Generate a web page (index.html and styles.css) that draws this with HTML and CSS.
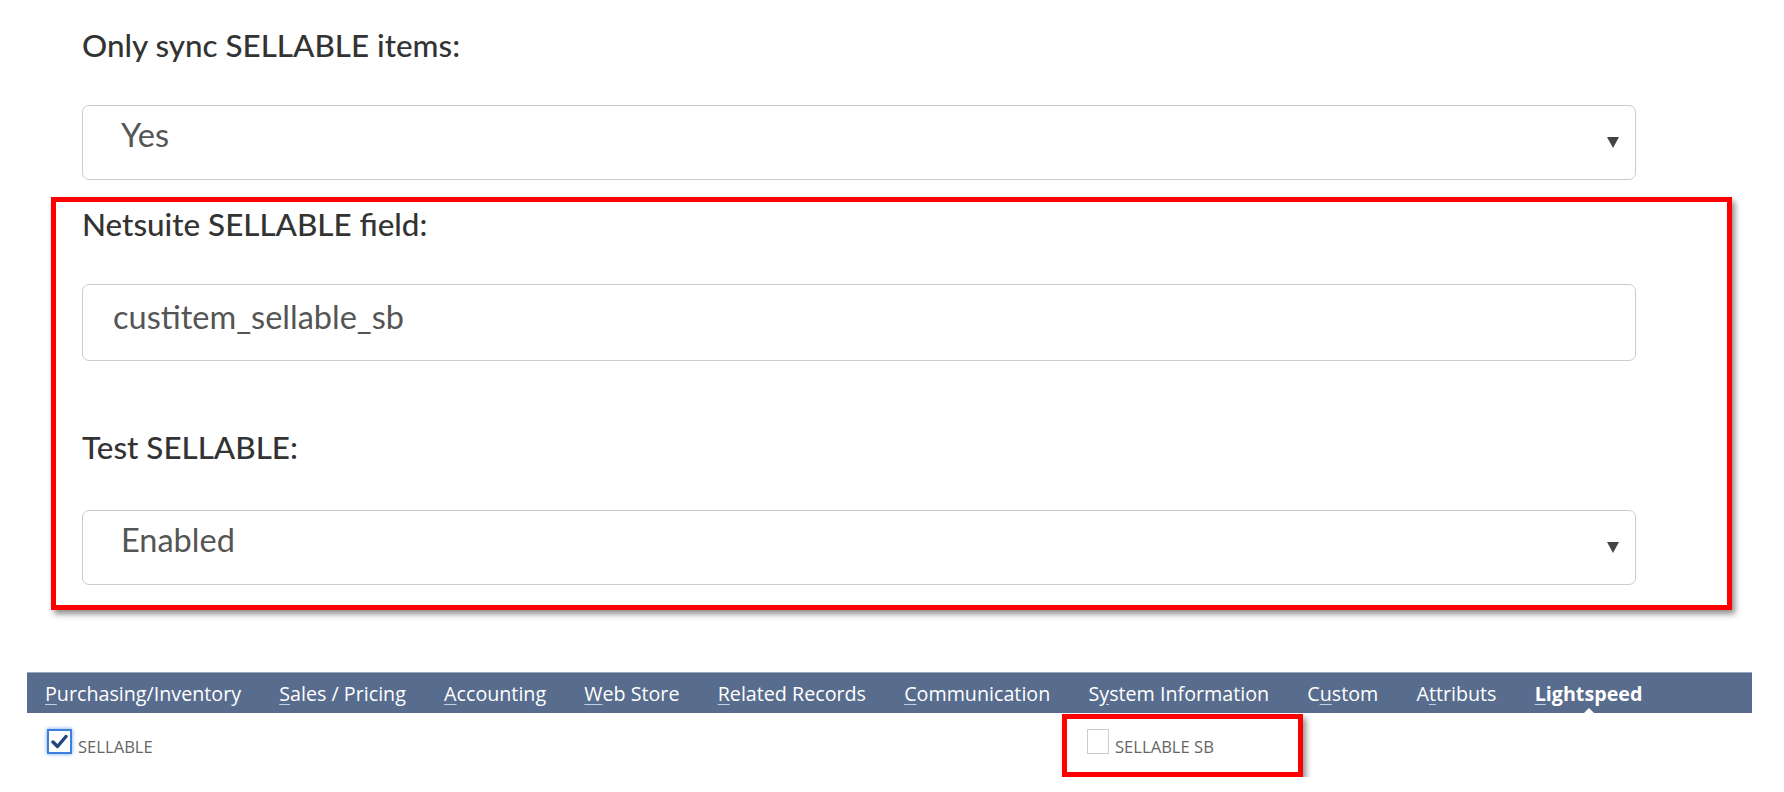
FILE: index.html
```html
<!DOCTYPE html>
<html lang="en">
<head>
  <meta charset="UTF-8" />
  <title>Lightspeed Settings</title>
  <link rel="stylesheet" href="styles.css">
</head>
<body>
  <div class="settings">
    <div class="field">
      <label class="field-label">Only sync SELLABLE items:</label>
      <div class="select-wrap">
        <select class="control">
          <option>Yes</option>
        </select>
      </div>
    </div>

    <div class="highlight">
      <div class="field">
        <label class="field-label">Netsuite SELLABLE field:</label>
        <input class="control text-control" type="text" value="custitem_sellable_sb" />
      </div>
      <div class="field field-spaced">
        <label class="field-label">Test SELLABLE:</label>
        <div class="select-wrap">
          <select class="control">
            <option>Enabled</option>
          </select>
        </div>
      </div>
    </div>
  </div>

  <div class="record">
    <div class="tabs">
      <span class="tab"><u>P</u>urchasing/Inventory</span>
      <span class="tab"><u>S</u>ales / Pricing</span>
      <span class="tab"><u>A</u>ccounting</span>
      <span class="tab"><u>W</u>eb Store</span>
      <span class="tab"><u>R</u>elated Records</span>
      <span class="tab"><u>C</u>ommunication</span>
      <span class="tab">S<u>y</u>stem Information</span>
      <span class="tab">C<u>u</u>stom</span>
      <span class="tab">A<u>t</u>tributs</span>
      <span class="tab tab-active"><u>L</u>ightspeed</span>
    </div>

    <div class="checkbox-row">
      <div class="check-field">
        <span class="checkbox checked">
          <svg width="17" height="15" viewBox="0 0 17 15"><path d="M2 8 L6.5 12.5 L15 2.5" fill="none" stroke="#24467e" stroke-width="3.4" stroke-linecap="round" stroke-linejoin="round"/></svg>
        </span>
        <span class="check-label">SELLABLE</span>
      </div>
      <div class="check-field highlight-small">
        <span class="checkbox"></span>
        <span class="check-label">SELLABLE SB</span>
      </div>
    </div>
  </div>
</body>
</html>
```

FILE: styles.css
```css
body {
  margin: 0;
  background: #fff;
  font-family: Lato, "Liberation Sans", sans-serif;
  color: #333;
}

.settings {
  padding-top: 25px;
  width: 1681px;
}

.field {
  padding-left: 82px;
  width: 1554px;
}

.highlight .field {
  padding-left: 26px;
}

.field-label {
  display: block;
  font-size: 31.4px;
  line-height: 40px;
  font-weight: 500;
  color: #333;
  margin-bottom: 40px;
}

.field-spaced {
  margin-top: 66px;
}

.select-wrap {
  position: relative;
}

.select-wrap::after {
  content: "";
  position: absolute;
  right: 17px;
  top: 32px;
  border-left: 6px solid transparent;
  border-right: 6px solid transparent;
  border-top: 11px solid #444;
  pointer-events: none;
}

.control {
  display: block;
  box-sizing: border-box;
  width: 100%;
  height: 75px;
  padding: 0 40px 16px 38px;
  border: 1px solid #ccc;
  border-radius: 7px;
  background: #fff;
  font-family: Lato, "Liberation Sans", sans-serif;
  font-size: 32.5px;
  color: #555;
  appearance: none;
  -webkit-appearance: none;
  outline: none;
}

.text-control {
  height: 77px;
  padding-left: 30px;
  padding-bottom: 12px;
}

.highlight {
  margin: 17px 0 0 51px;
  border: 5px solid #ff0000;
  padding: 2px 91px 20px 0;
  width: 1580px;
  box-shadow: 3px 4px 6px rgba(0, 0, 0, 0.45);
}

.highlight .field-spaced .field-label {
  margin-bottom: 43px;
}

.record {
  margin: 62px 0 0 27px;
  width: 1725px;
  font-family: "Open Sans", sans-serif;
}

.tabs {
  display: flex;
  gap: 38.2px;
  height: 40px;
  align-items: center;
  padding-left: 18px;
  background: #586c8e;
  border-top: 1px solid #9aa9c0;
}

.tab {
  position: relative;
  color: #fff;
  font-size: 19.7px;
  white-space: nowrap;
}

.tab u {
  text-decoration-color: #c5cede;
  text-underline-offset: 3px;
}

.tab-active {
  font-weight: 700;
}

.tab-active::after {
  content: "";
  position: absolute;
  left: 50%;
  bottom: -9px;
  margin-left: -8px;
  border-left: 8px solid transparent;
  border-right: 8px solid transparent;
  border-bottom: 8px solid #fff;
}

.checkbox-row {
  display: grid;
  grid-template-columns: 1015px 241px;
  align-items: start;
  padding-left: 20px;
}

.check-field {
  display: flex;
  align-items: flex-start;
  gap: 6px;
  padding-top: 16px;
}

.highlight-small {
  box-sizing: border-box;
  height: 63px;
  margin-top: 1px;
  padding: 10px 0 0 20px;
  border: 5px solid #ff0000;
  box-shadow: 3px 4px 6px rgba(0, 0, 0, 0.45);
}

.checkbox {
  box-sizing: border-box;
  width: 25px;
  height: 25px;
  border: 1px solid #ccc;
  background: #fff;
  display: flex;
  align-items: center;
  justify-content: center;
}

.highlight-small .checkbox {
  width: 22px;
  height: 25px;
}

.checkbox.checked {
  border: 2px solid #3c7fde;
  box-shadow: 0 0 4px #6fa3ea;
}

.check-label {
  font-size: 16.6px;
  line-height: 22px;
  color: #666;
  padding-top: 7px;
}
```
